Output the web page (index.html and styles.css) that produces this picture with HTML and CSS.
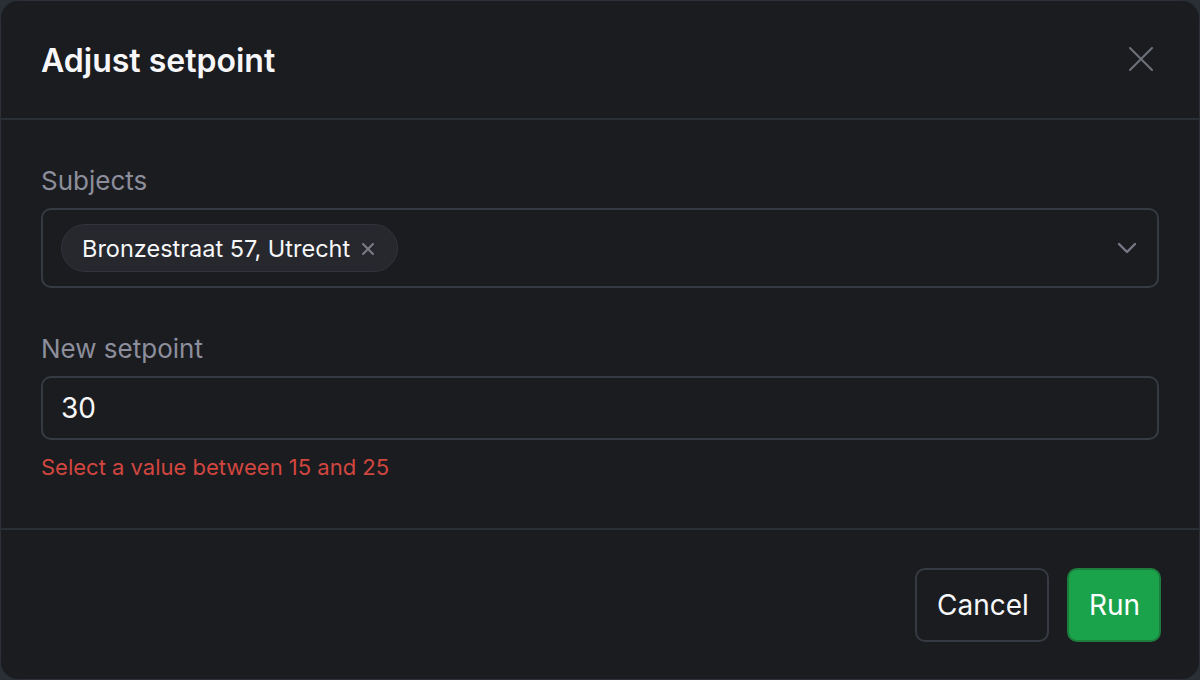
FILE: index.html
```html
<!DOCTYPE html>
<html lang="en">
<head>
<meta charset="utf-8">
<title>Adjust setpoint</title>
<link rel="stylesheet" href="styles.css">
</head>
<body>
<div class="dialog">
  <header class="dialog-header">
    <h1 class="title">Adjust setpoint</h1>
    <button class="close" aria-label="Close">
      <svg width="24" height="24" viewBox="0 0 24 24" fill="none" stroke="currentColor" stroke-width="2" stroke-linecap="round"><path d="M1 1L23 23M23 1L1 23"/></svg>
    </button>
  </header>
  <section class="dialog-body">
    <div class="field">
      <label class="label">Subjects</label>
      <div class="select">
        <span class="chip">Bronzestraat 57, Utrecht
          <svg class="chip-x" width="12" height="12" viewBox="0 0 12 12" fill="none" stroke="currentColor" stroke-width="2" stroke-linecap="round"><path d="M1 1L11 11M11 1L1 11"/></svg>
        </span>
        <svg class="chevron" width="20" height="12" viewBox="0 0 20 12" fill="none" stroke="currentColor" stroke-width="2.4" stroke-linecap="round" stroke-linejoin="round"><path d="M2 2L10 10L18 2"/></svg>
      </div>
    </div>
    <div class="field field-2">
      <label class="label">New setpoint</label>
      <div class="input">30</div>
      <p class="error">Select a value between 15 and 25</p>
    </div>
  </section>
  <footer class="dialog-footer">
    <button class="btn btn-cancel">Cancel</button>
    <button class="btn btn-run">Run</button>
  </footer>
</div>
</body>
</html>
```
FILE: styles.css
```css
html, body {
  margin: 0;
  padding: 0;
  background: #2a2e35;
}
body {
  width: 1200px;
  height: 680px;
  font-family: Inter, "Noto Sans", sans-serif;
  color: #f5f5f7;
}
.dialog {
  box-sizing: border-box;
  width: 1200px;
  height: 680px;
  background: #1b1c20;
  border: 1px solid #2c3038;
  border-radius: 18px;
  display: flex;
  flex-direction: column;
  overflow: hidden;
}
.dialog-header {
  height: 119px;
  box-sizing: border-box;
  border-bottom: 2px solid #2a2e35;
  display: flex;
  align-items: center;
  justify-content: space-between;
  padding: 2px 46px 0 40px;
}
.title {
  margin: 0;
  font-size: 32px;
  line-height: 40px;
  font-weight: 600;
  color: #f7f7f9;
}
.close {
  background: none;
  border: 0;
  padding: 0;
  color: #6f717b;
  display: flex;
  margin-top: -4px;
}
.dialog-body {
  flex: 1;
  padding: 44px 40px 0;
}
.field {
  display: flex;
  flex-direction: column;
}
.field-2 {
  margin-top: 44px;
}
.label {
  font-size: 26px;
  line-height: 34px;
  color: #8c8e9b;
  margin-bottom: 10px;
}
.select {
  box-sizing: border-box;
  height: 80px;
  border: 2px solid #363a42;
  border-radius: 10px;
  display: flex;
  align-items: center;
  justify-content: space-between;
  padding: 0 20px 0 18px;
}
.chip {
  box-sizing: border-box;
  height: 48px;
  display: inline-flex;
  align-items: center;
  gap: 12px;
  padding: 0 23px 0 20px;
  border-radius: 24px;
  background: #26282d;
  border: 1px solid #30343b;
  font-size: 23.5px;
  color: #f7f7f9;
}
.chip-x {
  color: #7a7c86;
  margin-top: 1px;
}
.chevron {
  color: #777884;
}
.input {
  box-sizing: border-box;
  height: 64px;
  border: 2px solid #363a42;
  border-radius: 10px;
  display: flex;
  align-items: center;
  padding: 0 18px;
  font-size: 28px;
  color: #f7f7f9;
}
.error {
  margin: 12px 0 0;
  font-size: 22px;
  line-height: 30px;
  color: #d1463f;
}
.dialog-footer {
  border-top: 2px solid #2a2e35;
  height: 151px;
  box-sizing: border-box;
  display: flex;
  justify-content: flex-end;
  align-items: center;
  gap: 18px;
  padding: 0 38px 0 0;
}
.btn {
  box-sizing: border-box;
  height: 74px;
  border-radius: 10px;
  font-family: Inter, "Noto Sans", sans-serif;
  font-size: 28px;
  padding: 0 20px;
  cursor: pointer;
}
.btn-cancel {
  background: #1b1c20;
  border: 2px solid #363a42;
  color: #f7f7f9;
  width: 134px;
}
.btn-run {
  background: #1aa34b;
  border: 2px solid #1c7d3c;
  color: #ffffff;
  width: 94px;
}
```
